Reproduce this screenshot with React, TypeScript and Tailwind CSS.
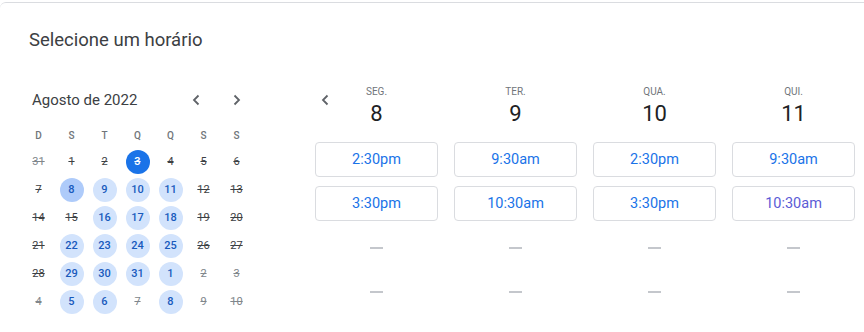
import React from "react";

type Cell = { n: number; kind: "out" | "un" | "av" | "sel" | "today" };

const rows: Cell[][] = [
  [
    { n: 31, kind: "out" },
    { n: 1, kind: "un" },
    { n: 2, kind: "un" },
    { n: 3, kind: "today" },
    { n: 4, kind: "un" },
    { n: 5, kind: "un" },
    { n: 6, kind: "un" },
  ],
  [
    { n: 7, kind: "un" },
    { n: 8, kind: "sel" },
    { n: 9, kind: "av" },
    { n: 10, kind: "av" },
    { n: 11, kind: "av" },
    { n: 12, kind: "un" },
    { n: 13, kind: "un" },
  ],
  [
    { n: 14, kind: "un" },
    { n: 15, kind: "un" },
    { n: 16, kind: "av" },
    { n: 17, kind: "av" },
    { n: 18, kind: "av" },
    { n: 19, kind: "un" },
    { n: 20, kind: "un" },
  ],
  [
    { n: 21, kind: "un" },
    { n: 22, kind: "av" },
    { n: 23, kind: "av" },
    { n: 24, kind: "av" },
    { n: 25, kind: "av" },
    { n: 26, kind: "un" },
    { n: 27, kind: "un" },
  ],
  [
    { n: 28, kind: "un" },
    { n: 29, kind: "av" },
    { n: 30, kind: "av" },
    { n: 31, kind: "av" },
    { n: 1, kind: "av" },
    { n: 2, kind: "out" },
    { n: 3, kind: "out" },
  ],
  [
    { n: 4, kind: "out" },
    { n: 5, kind: "av" },
    { n: 6, kind: "av" },
    { n: 7, kind: "out" },
    { n: 8, kind: "av" },
    { n: 9, kind: "out" },
    { n: 10, kind: "out" },
  ],
];

const Chevron = ({ dir }: { dir: "l" | "r" }) => (
  <svg width="8" height="12" viewBox="0 0 8 12" fill="none">
    {dir === "l" ? (
      <path d="M6.5 1.5 L2 6 L6.5 10.5" stroke="#5f6368" strokeWidth="1.8" />
    ) : (
      <path d="M1.5 1.5 L6 6 L1.5 10.5" stroke="#5f6368" strokeWidth="1.8" />
    )}
  </svg>
);

function DayCell({ c }: { c: Cell }) {
  const base =
    "w-[24px] h-[24px] rounded-full flex items-center justify-center text-[11px]";
  let cls = "";
  if (c.kind === "out") cls = "text-[#80868b] line-through";
  else if (c.kind === "un") cls = "text-[#3c4043] line-through";
  else if (c.kind === "av") cls = "bg-[#d2e3fc] text-[#185abc] font-medium";
  else if (c.kind === "sel") cls = "bg-[#aecbfa] text-[#185abc] font-medium";
  else cls = "bg-[#1a73e8] text-white line-through font-medium";
  return (
    <div className="w-[33px] h-[28px] flex items-center justify-center">
      <div className={`${base} ${cls}`}>{c.n}</div>
    </div>
  );
}

const cols = [
  { d: "SEG.", n: "8", t: ["2:30pm", "3:30pm"] },
  { d: "TER.", n: "9", t: ["9:30am", "10:30am"] },
  { d: "QUA.", n: "10", t: ["2:30pm", "3:30pm"] },
  { d: "QUI.", n: "11", t: ["9:30am", "10:30am"] },
];

export default function App() {
  return (
    <div
      className="w-[864px] h-[332px] bg-white overflow-hidden"
      style={{ fontFamily: "Roboto, 'Liberation Sans', sans-serif" }}
    >
      <div className="mt-[2px] border-t border-[#dadce0] rounded-tl-[6px]">
        <div className="pt-[25px] pl-[29px] text-[18.5px] leading-[24px] text-[#3c4043]">
          Selecione um horário
        </div>
        <div className="mt-[32px] flex items-start">
          {/* Calendar */}
          <div className="pl-[22px] w-[253px] pt-[4px]">
            <div className="flex items-center h-[24px]">
              <div className="pl-[10px] text-[15px] text-[#3c4043]">Agosto de 2022</div>
              <div className="ml-auto mr-[4px] flex gap-[17px]">
                <div className="w-[24px] h-[24px] flex items-center justify-center">
                  <Chevron dir="l" />
                </div>
                <div className="w-[24px] h-[24px] flex items-center justify-center">
                  <Chevron dir="r" />
                </div>
              </div>
            </div>
            <div className="mt-[15px] flex h-[16px]">
              {["D", "S", "T", "Q", "Q", "S", "S"].map((d, i) => (
                <div
                  key={i}
                  className="w-[33px] flex items-center justify-center text-[10px] font-medium text-[#70757a]"
                >
                  {d}
                </div>
              ))}
            </div>
            <div className="mt-[5px]">
              {rows.map((r, i) => (
                <div key={i} className="flex">
                  {r.map((c, j) => (
                    <DayCell key={j} c={c} />
                  ))}
                </div>
              ))}
            </div>
          </div>
          {/* Slots */}
          <div className="relative ml-[62px] pt-[2px] flex gap-[16px]">
            <div className="absolute left-[6px] top-[10px] w-[8px] h-[12px] flex">
              <Chevron dir="l" />
            </div>
            {cols.map((c, i) => (
              <div key={i} className="w-[123px] flex flex-col items-center">
                <div className="h-[12px] leading-[12px] text-[10px] text-[#70757a]">
                  {c.d}
                </div>
                <div className="mt-[2px] h-[28px] leading-[28px] text-[22px] text-[#202124]">
                  {c.n}
                </div>
                <div className="mt-[14px] w-full flex flex-col gap-[9px]">
                  {c.t.map((t, k) => (
                    <div
                      key={k}
                      className={`h-[35px] w-full border border-[#dadce0] rounded-[4px] flex items-center justify-center text-[14.5px] ${
                        i === 3 && k === 1 ? "text-[#5b5bd6]" : "text-[#1a73e8]"
                      }`}
                    >
                      {t}
                    </div>
                  ))}
                  {[0, 1].map((k) => (
                    <div key={"d" + k} className="h-[35px] w-full flex items-center justify-center">
                      <div className="w-[13px] h-[2px] bg-[#c4c7cc]" />
                    </div>
                  ))}
                </div>
              </div>
            ))}
          </div>
        </div>
      </div>
    </div>
  );
}
